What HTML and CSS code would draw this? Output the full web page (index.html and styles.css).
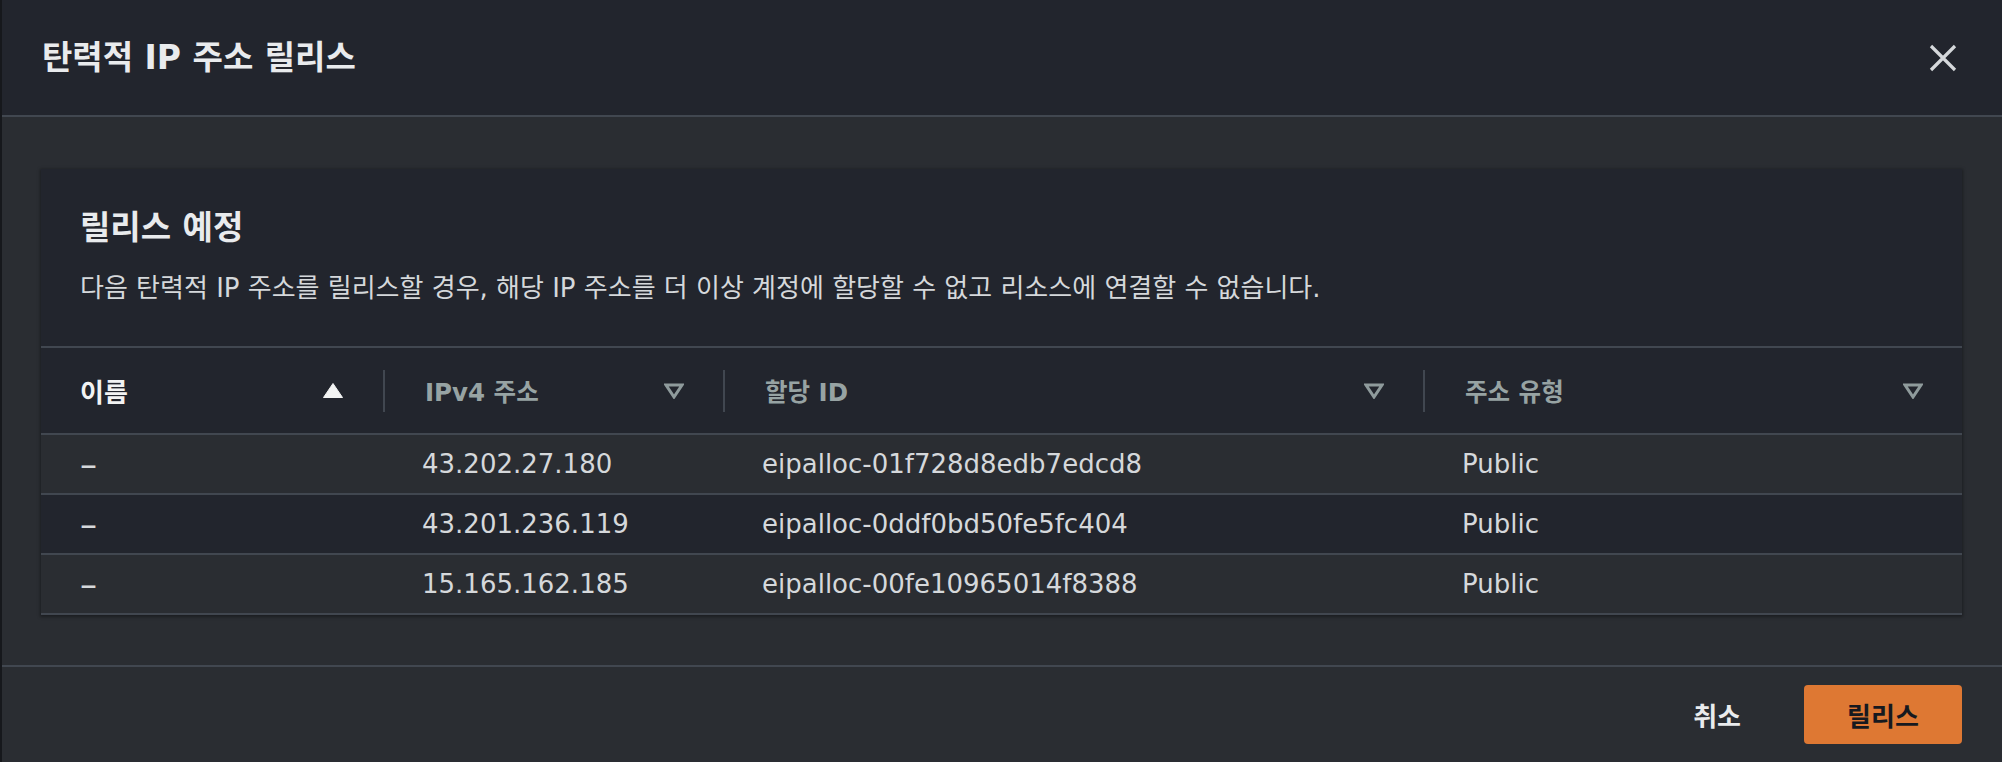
FILE: index.html
```html
<!DOCTYPE html>
<html lang="ko">
<head>
<meta charset="utf-8">
<title>탄력적 IP 주소 릴리스</title>
<link rel="stylesheet" href="styles.css">
</head>
<body>
<div class="modal">
  <header class="modal-header">
    <h1 class="modal-title">탄력적 IP 주소 릴리스</h1>
    <button class="close-btn" aria-label="닫기">
      <svg width="28" height="28" viewBox="0 0 28 28"><path d="M2 2 L26 26 M26 2 L2 26" stroke="#d5d8db" stroke-width="3.2" fill="none"/></svg>
    </button>
  </header>
  <main class="modal-body">
    <section class="card">
      <div class="card-header">
        <h2 class="card-title">릴리스 예정</h2>
        <p class="card-desc">다음 탄력적 IP 주소를 릴리스할 경우, 해당 IP 주소를 더 이상 계정에 할당할 수 없고 리소스에 연결할 수 없습니다.</p>
      </div>
      <table class="table">
        <colgroup>
          <col class="c1"><col class="c2"><col class="c3"><col class="c4">
        </colgroup>
        <thead>
          <tr>
            <th><div class="th-inner first sorted"><span>이름</span>
              <svg class="sort" width="20" height="15" viewBox="0 0 20 15"><polygon points="10,0.5 19.5,14.5 0.5,14.5" fill="#f2f3f3" stroke="#f2f3f3" stroke-width="1" stroke-linejoin="round"/></svg></div></th>
            <th><div class="th-inner"><span>IPv4 주소</span>
              <svg class="sort" width="20" height="16" viewBox="0 0 20 16"><polygon points="2,2 18,2 10,14" fill="none" stroke="#8f9b9c" stroke-width="3"/></svg></div></th>
            <th><div class="th-inner"><span>할당 ID</span>
              <svg class="sort" width="20" height="16" viewBox="0 0 20 16"><polygon points="2,2 18,2 10,14" fill="none" stroke="#8f9b9c" stroke-width="3"/></svg></div></th>
            <th><div class="th-inner"><span>주소 유형</span>
              <svg class="sort" width="20" height="16" viewBox="0 0 20 16"><polygon points="2,2 18,2 10,14" fill="none" stroke="#8f9b9c" stroke-width="3"/></svg></div></th>
          </tr>
        </thead>
        <tbody>
          <tr class="odd"><td><span class="empty">–</span></td><td>43.202.27.180</td><td>eipalloc-01f728d8edb7edcd8</td><td>Public</td></tr>
          <tr class="even"><td><span class="empty">–</span></td><td>43.201.236.119</td><td>eipalloc-0ddf0bd50fe5fc404</td><td>Public</td></tr>
          <tr class="odd"><td><span class="empty">–</span></td><td>15.165.162.185</td><td>eipalloc-00fe10965014f8388</td><td>Public</td></tr>
        </tbody>
      </table>
    </section>
  </main>
  <footer class="modal-footer">
    <button class="btn btn-link">취소</button>
    <button class="btn btn-primary">릴리스</button>
  </footer>
</div>
</body>
</html>
```

FILE: styles.css
```css
html, body {
  margin: 0;
  padding: 0;
}
body {
  width: 2002px;
  height: 762px;
  overflow: hidden;
  background: #16181c;
  font-family: "DejaVu Sans", "Noto Sans CJK KR", sans-serif;
  font-size: 26px;
  color: #d1d5db;
}
.modal {
  border-left: 2px solid #16181c;
  background: #2a2d32;
  height: 762px;
  display: flex;
  flex-direction: column;
}
.modal-header {
  box-sizing: border-box;
  height: 117px;
  display: flex;
  align-items: center;
  justify-content: space-between;
  padding: 0 45px 0 40px;
  background: #22252d;
  border-bottom: 2px solid #414750;
}
.modal-title {
  margin: 0;
  font-size: 33px;
  line-height: 38px;
  font-weight: 700;
  color: #e9ebed;
}
.close-btn {
  background: none;
  border: 0;
  padding: 0;
  display: flex;
  cursor: pointer;
}
.modal-body {
  padding: 52px 40px 50px 39px;
}
.card {
  background: #22252d;
  box-shadow: 0 1px 3px 1px rgba(0, 0, 0, 0.35);
}
.card-header {
  padding: 40px 39px 41px;
}
.card-title {
  margin: 0;
  font-size: 33px;
  line-height: 38px;
  font-weight: 700;
  color: #e9ebed;
}
.card-desc {
  margin: 24px 0 0;
  line-height: 34px;
  color: #d5d8db;
}
.table {
  width: 100%;
  border-collapse: collapse;
  table-layout: fixed;
  border-top: 2px solid #414750;
}
.c1 { width: 342px; }
.c2 { width: 340px; }
.c3 { width: 700px; }
.c4 { width: 539px; }
.table th {
  height: 85px;
  padding: 0;
  border-bottom: 2px solid #414750;
  text-align: left;
  font-size: 24.5px;
  font-weight: 700;
  color: #97a3a3;
}
.th-inner {
  display: flex;
  align-items: center;
  justify-content: space-between;
  height: 42px;
  border-left: 2px solid #414750;
  padding: 0 39px 0 40px;
}
.th-inner.first {
  border-left: 0;
  padding-left: 39px;
  padding-right: 40px;
}
.th-inner.sorted {
  color: #f2f3f3;
  font-size: 26px;
}
.sort {
  display: block;
  flex: none;
}
.table td {
  height: 58px;
  padding: 0 0 0 39px;
  border-bottom: 2px solid #414750;
  line-height: 30px;
  color: #d5d8db;
  white-space: nowrap;
}
.empty {
  display: inline-block;
  font-size: 34px;
  line-height: 30px;
  vertical-align: top;
}
.table tr.odd td {
  background: #2a2d32;
}
.table tr.even td {
  background: #22252d;
}
.modal-footer {
  border-top: 2px solid #414750;
  padding: 18px 40px 18px;
  display: flex;
  justify-content: flex-end;
  align-items: center;
  gap: 27px;
}
.btn {
  font-family: inherit;
  font-size: 26px;
  font-weight: 700;
  height: 59px;
  border: 0;
  border-radius: 4px;
  cursor: pointer;
  display: flex;
  align-items: center;
  justify-content: center;
}
.btn-link {
  background: transparent;
  color: #e9ebed;
  padding: 0 36px;
}
.btn-primary {
  background: #de7833;
  color: #16191f;
  width: 158px;
}
```
